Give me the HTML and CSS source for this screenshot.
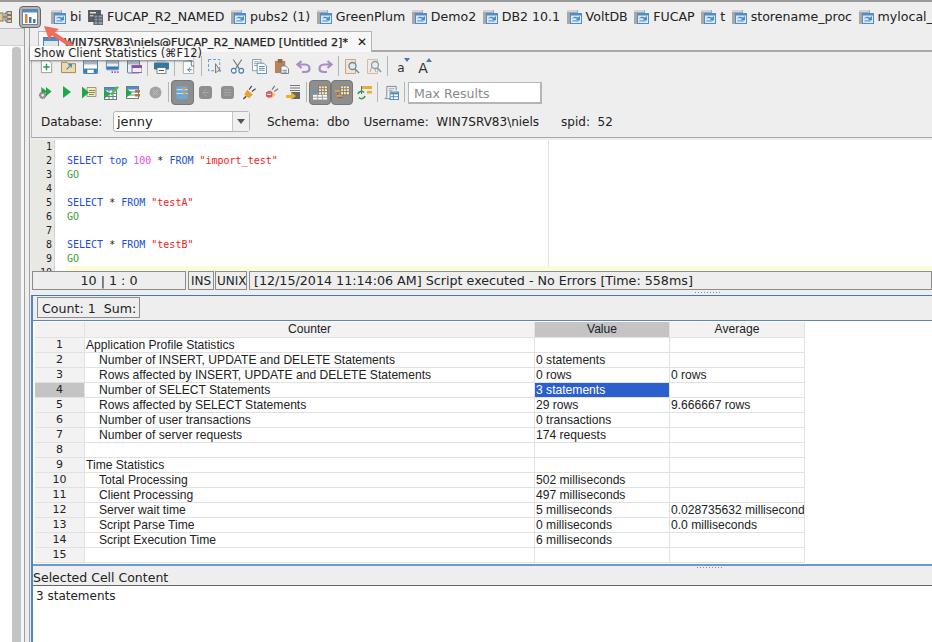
FILE: index.html
```html
<!DOCTYPE html>
<html lang="en">
<head>
<meta charset="utf-8">
<title>SQL client statistics</title>
<link rel="stylesheet" href="styles.css">
</head>
<body>
<svg class="defs" xmlns="http://www.w3.org/2000/svg">
  <symbol id="conn" viewBox="0 0 15 16">
    <rect x="0" y="1" width="11" height="14" fill="#a8a8a8"/>
    <path d="M1 1v2M3 1v2M5 1v2M7 1v2M9 1v2" stroke="#fff" stroke-width="1"/>
    <rect x="3.500" y="4.500" width="11" height="10" fill="#dce9f6" stroke="#4f8dc9"/>
    <rect x="3" y="4" width="12" height="2.500" fill="#4f8dc9"/>
    <path d="M5 9.500c1.500-2 4-2 6-1l2-1.500v4h-4l1-1.200c-1.500-.6-3.300-.5-5-.3z" fill="#4f8dc9"/>
    <path d="M13 11c-1.500 2-4 2.300-6 1.200l-1.500 1.300v-2.500z" fill="#7fb2e0"/>
  </symbol>
  <symbol id="named" viewBox="0 0 15 16">
    <rect x="0" y="1" width="13" height="12" fill="#555d66"/>
    <rect x="2" y="3" width="6" height="1.500" fill="#dfe3e6"/>
    <rect x="2" y="6" width="5" height="1.500" fill="#b9c0c6"/>
    <rect x="6" y="6" width="9" height="10" fill="#8d9aa8" stroke="#48525c" stroke-width="1"/>
    <path d="M6 9h9M6 12h9M10 6v10" stroke="#48525c"/>
  </symbol>
</svg>

<header class="topbar">
  <svg class="hier" viewBox="0 0 13 12"><rect x="0" y="2" width="4" height="8" fill="#e8c98a" stroke="#777"/><rect x="8" y=".5" width="4.500" height="3" fill="#e8c98a" stroke="#777"/><rect x="8" y="4.500" width="4.500" height="3" fill="#e8c98a" stroke="#777"/><rect x="8" y="8.500" width="4.500" height="3" fill="#e8c98a" stroke="#777"/><path d="M4 6h4M6 2v8h2M6 2h2" stroke="#666" fill="none"/></svg>
  <button class="statbtn" type="button">
    <svg viewBox="0 0 16 16"><rect x=".5" y=".5" width="15" height="15" fill="#fff" stroke="#6d8296"/><rect x="1" y="1" width="14" height="2.500" fill="#4f8dc9"/><rect x="3" y="5" width="2.500" height="9" fill="#e8822e"/><rect x="7" y="8" width="2.500" height="6" fill="#3f78c0"/><rect x="11" y="10" width="2.500" height="4" fill="#3f78c0"/></svg>
  </button>
  <nav class="conns">
    <span class="conn"><svg class="ci"><use href="#conn"/></svg>bi</span>
    <span class="conn"><svg class="ci"><use href="#named"/></svg>FUCAP_R2_NAMED</span>
    <span class="conn"><svg class="ci"><use href="#conn"/></svg>pubs2 (1)</span>
    <span class="conn"><svg class="ci"><use href="#conn"/></svg>GreenPlum</span>
    <span class="conn"><svg class="ci"><use href="#conn"/></svg>Demo2</span>
    <span class="conn"><svg class="ci"><use href="#conn"/></svg>DB2 10.1</span>
    <span class="conn"><svg class="ci"><use href="#conn"/></svg>VoltDB</span>
    <span class="conn"><svg class="ci"><use href="#conn"/></svg>FUCAP</span>
    <span class="conn"><svg class="ci"><use href="#conn"/></svg>t</span>
    <span class="conn"><svg class="ci"><use href="#conn"/></svg>storename_proc</span>
    <span class="conn"><svg class="ci"><use href="#conn"/></svg>mylocal_</span>
  </nav>
</header>

<div class="main">
  <aside class="side">
    <div class="side-head"></div>
    <div class="side-body"><div class="side-scroll"></div></div>
  </aside>

  <section class="work">
    <div class="tabstrip">
      <div class="tab">
        <svg class="tabicon" viewBox="0 0 16 16"><rect x=".5" y=".5" width="15" height="15" fill="#dfe7ee" stroke="#5a7f9f"/><rect x="1" y="1" width="14" height="3" fill="#4f8dc9"/></svg>
        <span class="tabtext">WIN7SRV83\niels@FUCAP_R2_NAMED [Untitled 2]*</span>
        <span class="tabx">✕</span>
      </div>
    </div>

    <div class="tools">
      <div class="toolrow r1">
        <span class="ti"><svg viewBox="0 0 14 16"><path d="M1.500 1.500h8l3 3v10h-11z" fill="#fff" stroke="#999"/><path d="M7 5v7M3.500 8.500h7" stroke="#25a04a" stroke-width="1.600"/></svg></span>
        <span class="ti"><svg viewBox="0 0 16 14"><path d="M.5 2.500h6l1 1.500h8v9.500h-15z" fill="#ecd9ae" stroke="#a08350"/><path d="M6 10l5-5M8 5h3v3" stroke="#3d86b8" fill="none" stroke-width="1.200"/></svg></span>
        <span class="ti"><svg viewBox="0 0 14 14"><rect x=".5" y=".5" width="13" height="13" rx="1" fill="#e8eef3" stroke="#4b86b4"/><rect x="1" y="1" width="12" height="4" fill="#a9b5bf"/><rect x="1" y="6" width="12" height="3" fill="#fff"/><rect x="1" y="9" width="12" height="4" fill="#3a7aad"/><rect x="4" y="10" width="6" height="3" fill="#fff"/></svg></span>
        <span class="ti"><svg viewBox="0 0 14 16"><rect x=".5" y=".5" width="13" height="11" rx="1" fill="#e8eef3" stroke="#4b86b4"/><rect x="1" y="1" width="12" height="4" fill="#a9b5bf"/><rect x="1" y="8" width="12" height="3" fill="#3a7aad"/><path d="M6 14h1.500M9 14h1.500M12 14h1.500" stroke="#8a50a8" stroke-width="2"/></svg></span>
        <span class="ti"><svg viewBox="0 0 15 14"><rect x=".5" y=".5" width="12" height="13" rx="1" fill="#e8eef3" stroke="#4b86b4"/><rect x="1" y="1" width="11" height="4" fill="#a9b5bf"/><rect x="5" y="6" width="10" height="7" fill="#f2eaf5" stroke="#8a6aa0"/><rect x="5" y="6" width="10" height="2.500" fill="#8a50a8"/></svg></span>
        <span class="sep"></span>
        <span class="ti"><svg viewBox="0 0 15 14"><rect x="3" y="0" width="9" height="3" fill="#cfd6dc"/><rect x="0" y="3" width="15" height="7" rx="1" fill="#2f78a8"/><rect x="3" y="8" width="9" height="6" fill="#fff" stroke="#555" stroke-width=".7"/><path d="M5 11h5" stroke="#555"/></svg></span>
        <span class="sep"></span>
        <span class="ti"><svg viewBox="0 0 14 16"><path d="M1.500 2.500h11v13h-11z" fill="#fff" stroke="#aaa"/><path d="M7 1.500h3v6h3M9 9l-3 2.500 3 2.500M6 11.500h5" fill="none" stroke="#3d86b8"/></svg></span>
        <span class="sep"></span>
        <span class="ti"><svg viewBox="0 0 16 16"><path d="M.5.5h12v12H.5z" fill="none" stroke="#4b9ad0" stroke-dasharray="3 2"/><path d="M8 5v10l2.500-2.500 3 .5z" fill="#ddd" stroke="#777"/></svg></span>
        <span class="ti"><svg viewBox="0 0 15 16"><path d="M3 .5l6.500 10M12 .5L5.500 10.500" stroke="#777" stroke-width="1.200"/><circle cx="3.500" cy="12.500" r="2.500" fill="#fff" stroke="#3d7fb0" stroke-width="1.200"/><circle cx="11.500" cy="12.500" r="2.500" fill="#fff" stroke="#3d7fb0" stroke-width="1.200"/></svg></span>
        <span class="ti"><svg viewBox="0 0 16 16"><rect x=".5" y=".5" width="9" height="12" fill="#fff" stroke="#8aa0b2"/><path d="M2 3h6M2 5h6M2 7h6" stroke="#8aa0b2"/><path d="M5.500 4.500h7l3 3v8h-10z" fill="#fff" stroke="#5e8cb0"/><path d="M7.500 8h6M7.500 10h6M7.500 12h6" stroke="#4b86b4"/></svg></span>
        <span class="ti"><svg viewBox="0 0 16 16"><rect x="1" y="2" width="11" height="13" fill="#b9835a"/><rect x="4" y="0" width="5" height="4" fill="#8a6a50"/><path d="M7.500 7.500h5l3 3v5h-8z" fill="#fff" stroke="#6a7d8c"/><path d="M9 12h5M9 14h5" stroke="#6a7d8c"/></svg></span>
        <span class="ti"><svg viewBox="0 0 15 14"><path d="M5.500 1.500L1.500 5l4 3.500M2 5h7c3 0 4.500 2 4.500 4s-1.500 3.500-4.500 3.500H6" fill="none" stroke="#ab8cc4" stroke-width="2.200"/></svg></span>
        <span class="ti"><svg viewBox="0 0 15 14"><path d="M9.500 1.500l4 3.500-4 3.500M13 5H6C3 5 1.500 7 1.500 9s1.500 3.500 4.500 3.500h3" fill="none" stroke="#ab8cc4" stroke-width="2.200"/></svg></span>
        <span class="sep"></span>
        <span class="ti"><svg viewBox="0 0 15 15"><path d="M.5.5h10v14H.5z" fill="#f3e3d0" stroke="#c7a888"/><circle cx="7.500" cy="7" r="3.500" fill="#dfe9f0" stroke="#6f8796" stroke-width="1.300"/><path d="M10 10l4 4" stroke="#6f8796" stroke-width="1.600"/></svg></span>
        <span class="ti"><svg viewBox="0 0 15 15"><path d="M.5.5h10v14H.5z" fill="#f5eadf" stroke="#d2bba5"/><path d="M3 13l3-9 3 9" fill="none" stroke="#aaa"/><circle cx="8" cy="6" r="3.500" fill="#e6edf2" stroke="#8b9ca8" stroke-width="1.300"/><path d="M10.500 9l3.500 4" stroke="#8b9ca8" stroke-width="1.600"/></svg></span>
        <span class="sep"></span>
        <span class="ti fa small">a<i class="up dn"></i></span>
        <span class="ti fa">A<i class="up"></i></span>
      </div>

      <div class="toolrow r2">
        <span class="ti"><svg viewBox="0 0 15 16"><path d="M3 2l6 5-6 5z" fill="#1fa84a"/><path d="M8 2l6 5-6 5z" fill="#1fa84a"/><circle cx="4.500" cy="11" r="3.500" fill="#999" stroke="#666" stroke-dasharray="1.500 1"/><circle cx="4.500" cy="11" r="1.300" fill="#eee"/></svg></span>
        <span class="ti"><svg class="play" viewBox="0 0 10 14"><path d="M1 1l8 6-8 6z" fill="#1fa84a"/></svg></span>
        <span class="ti"><svg viewBox="0 0 15 14"><path d="M5 2h9v9H5z" fill="#f6eab8" stroke="#9a9a80"/><path d="M7 5h6M7 7h6M7 9h5" stroke="#8a8a70"/><path d="M0 1l7 6-7 6z" fill="#1fa84a"/></svg></span>
        <span class="ti"><svg viewBox="0 0 15 15"><rect x=".5" y="2.500" width="12" height="12" fill="#fff" stroke="#6a7d8c"/><rect x="1" y="3" width="11" height="2.500" fill="#4f8dc9"/><path d="M1 8.500h11M1 11.500h11M5 5v9M9 5v9" stroke="#6a7d8c"/><path d="M0 4l6 5-6 5z" fill="#1fa84a"/><path d="M6 9l7-8 2 1.500-7 8z" fill="#5fb84a"/></svg></span>
        <span class="ti"><svg viewBox="0 0 15 15"><rect x=".5" y="1.500" width="12" height="12" fill="#fff" stroke="#6a7d8c"/><rect x="1" y="2" width="11" height="2.500" fill="#4f8dc9"/><path d="M1 7h11M1 10h11" stroke="#6a7d8c"/><path d="M0 3l6 5-6 5z" fill="#1fa84a"/><rect x="9" y="5" width="5" height="2.500" fill="#a87a40"/><rect x="9" y="9" width="5" height="2.500" fill="#a87a40"/></svg></span>
        <span class="ti"><svg class="stop" viewBox="0 0 13 13"><circle cx="6.500" cy="6.500" r="6" fill="#a3a3a3"/><path d="M4 4l5 5M9 4l-5 5" stroke="#bcbcbc"/></svg></span>
        <span class="sep"></span>
        <span class="ti on w23"><svg viewBox="0 0 15 16"><rect x="1" y="1" width="12" height="14" rx="2" fill="#6fa6d8"/><path d="M1 5h12M1 9h12" stroke="#dcebf7"/><path d="M6 4l4-2v4zM12 9l-4-2v4z" fill="#e8a030"/></svg></span>
        <span class="ti"><svg class="mute" viewBox="0 0 13 13"><rect width="13" height="13" rx="3" fill="#8f8f8f"/><path d="M4 6.500h6M7 3l-3 3.500L7 10" stroke="#a8a8a8" fill="none"/></svg></span>
        <span class="ti"><svg class="mute" viewBox="0 0 13 13"><rect width="13" height="13" rx="3" fill="#8f8f8f"/><path d="M3 4h7M3 6.500h7M3 9h7" stroke="#a8a8a8"/></svg></span>
        <span class="ti"><svg viewBox="0 0 15 16"><path d="M10 1L7 5M14 4l-4 3" stroke="#444" stroke-width="1.200"/><path d="M5 5l6 5-4 4-5-4z" fill="#e8a030"/><path d="M4 12l-3 3" stroke="#444" stroke-width="1.400"/></svg></span>
        <span class="ti"><svg viewBox="0 0 15 16"><path d="M11 1L8 5M14.500 4l-4 3" stroke="#777" stroke-width="1.200"/><path d="M6 5l6 5-4 4-5-4z" fill="#efc486"/><circle cx="5" cy="10" r="3.500" fill="#e05555"/><path d="M3 10h4" stroke="#fff" stroke-width="1.300"/></svg></span>
        <span class="ti"><svg viewBox="0 0 15 15"><path d="M4 .5h10M4 3h10M4 5.500h10" stroke="#777"/><rect x="5" y="7" width="9" height="7" fill="#666"/><path d="M0 10h5V7l5 4-5 4v-2H0z" fill="#edb02c"/></svg></span>
        <span class="sep"></span>
        <span class="ti on"><svg viewBox="0 0 16 15"><rect x="6" y=".5" width="9.500" height="9.500" fill="#f4ecd8" stroke="#8c7a5a"/><path d="M6 3.500h9M6 6.500h9M9 1v9M12 1v9" stroke="#8c7a5a"/><rect x="0" y="5" width="5" height="2" fill="#4f9ad8"/><rect x="0" y="10" width="15" height="5" fill="#fff"/><path d="M0 12.500h15M5 10v5M10 10v5" stroke="#999"/></svg></span>
        <span class="ti on"><svg viewBox="0 0 16 15"><rect x="6" y=".5" width="9.500" height="9.500" fill="#f4ecd8" stroke="#8c7a5a"/><path d="M6 3.500h9M6 6.500h9M9 1v9M12 1v9" stroke="#8c7a5a"/><rect x="0" y="5" width="5" height="2" fill="#e8a030"/><rect x="2" y="10" width="5" height="2" fill="#e8a030"/><path d="M3 7v3M3 13h5" stroke="#666"/></svg></span>
        <span class="ti"><svg viewBox="0 0 15 15"><rect x="4" y="1" width="11" height="3" fill="#e8b030"/><rect x="10" y="6" width="5" height="2.500" fill="#e8b030"/><rect x="4" y="1" width="1" height="8" fill="#666"/><path d="M1 9a3.500 3.500 0 0 1 6-1.500M8 11a3.500 3.500 0 0 1-6 1.500" stroke="#2f9a4a" stroke-width="1.600" fill="none"/></svg></span>
        <span class="sep"></span>
        <span class="ti"><svg viewBox="0 0 16 16"><path d="M3 1.500h10M3 1.500v11l-2 2h9M13 1.500v4" stroke="#7a8896" fill="#f4f4f4"/><path d="M5 4h6M5 6h4" stroke="#9aa6b0"/><rect x="6.500" y="7.500" width="9" height="8" fill="#fff" stroke="#4b86b4"/><rect x="7" y="8" width="8" height="2" fill="#4b86b4"/><path d="M7 12.500h8M10 10v5" stroke="#4b86b4"/></svg></span>
        <span class="sep"></span>
        <input class="maxres" type="text" placeholder="Max Results">
      </div>

      <div class="dbrow">
        <span class="lbl">Database:</span>
        <span class="select"><span class="select-val">jenny</span><span class="select-btn"><i></i></span></span>
        <span class="meta">Schema:  dbo</span>
        <span class="meta m-user">Username:  WIN7SRV83\niels</span>
        <span class="meta m-spid">spid:  52</span>
      </div>
    </div>

    <div class="editor">
      <div class="gutter">1
2
3
4
5
6
7
8
9
10</div>
      <div class="code"><div class="margin"></div><pre class="sql">&nbsp;
<b>SELECT top</b> <em>100</em> * <b>FROM</b> <q>"import_test"</q>
<u>GO</u>

<b>SELECT</b> * <b>FROM</b> <q>"testA"</q>
<u>GO</u>

<b>SELECT</b> * <b>FROM</b> <q>"testB"</q>
<u>GO</u>
<span class="curline"></span></pre></div>
    </div>

    <div class="status">
      <span class="st st-pos">10 | 1 : 0</span>
      <span class="st st-ins">INS</span>
      <span class="st st-unix">UNIX</span>
      <span class="st st-msg">[12/15/2014 11:14:06 AM] Script executed - No Errors [Time: 558ms]</span>
    </div>
    <div class="split"><i class="dots"></i></div>

    <div class="lower">
      <div class="countbar"><span class="count">Count: 1  Sum:</span></div>
      <div class="tablewrap">
        <table class="stats">
          <colgroup><col class="c0"><col class="c1"><col class="c2"><col class="c2"></colgroup>
          <thead><tr><th class="rh"></th><th>Counter</th><th class="hl">Value</th><th>Average</th></tr></thead>
          <tbody>
            <tr><td class="rh">1</td><td>Application Profile Statistics</td><td></td><td></td></tr>
            <tr><td class="rh">2</td><td class="in">Number of INSERT, UPDATE and DELETE Statements</td><td>0 statements</td><td></td></tr>
            <tr><td class="rh">3</td><td class="in">Rows affected by INSERT, UPDATE and DELETE Statements</td><td>0 rows</td><td>0 rows</td></tr>
            <tr><td class="rh hl">4</td><td class="in">Number of SELECT Statements</td><td class="sel">3 statements</td><td></td></tr>
            <tr><td class="rh">5</td><td class="in">Rows affected by SELECT Statements</td><td>29 rows</td><td>9.666667 rows</td></tr>
            <tr><td class="rh">6</td><td class="in">Number of user transactions</td><td>0 transactions</td><td></td></tr>
            <tr><td class="rh">7</td><td class="in">Number of server requests</td><td>174 requests</td><td></td></tr>
            <tr><td class="rh">8</td><td></td><td></td><td></td></tr>
            <tr><td class="rh">9</td><td>Time Statistics</td><td></td><td></td></tr>
            <tr><td class="rh">10</td><td class="in">Total Processing</td><td>502 milliseconds</td><td></td></tr>
            <tr><td class="rh">11</td><td class="in">Client Processing</td><td>497 milliseconds</td><td></td></tr>
            <tr><td class="rh">12</td><td class="in">Server wait time</td><td>5 milliseconds</td><td>0.028735632 milliseconds</td></tr>
            <tr><td class="rh">13</td><td class="in">Script Parse Time</td><td>0 milliseconds</td><td>0.0 milliseconds</td></tr>
            <tr><td class="rh">14</td><td class="in">Script Execution Time</td><td>6 milliseconds</td><td></td></tr>
            <tr><td class="rh">15</td><td></td><td></td><td></td></tr>
          </tbody>
        </table>
      </div>
      <div class="split2"><i class="dots"></i></div>
      <div class="cellhead">Selected Cell Content</div>
      <div class="cellbody">3 statements</div>
    </div>
  </section>
</div>

<svg class="arrow" viewBox="0 0 40 30"><path d="M1 0l15 3-4 3.500L31 19l-3 3L9 9.500 6 14z" fill="#f26d5c"/></svg>
<div class="tooltip">Show Client Statistics (⌘F12)</div>
</body>
</html>
```

FILE: styles.css
```css
* { box-sizing: border-box; }
html, body { margin: 0; height: 100%; }
body {
  width: 932px; height: 642px; overflow: hidden; position: relative;
  background: #eeeeee; color: #222;
  font: 12px "DejaVu Sans", sans-serif;
  display: flex; flex-direction: column;
}
.defs { display: none; }

.topbar {
  height: 28px; flex: none; display: flex; align-items: center;
  border-top: 2px solid #9a9a9a; background: #eeeeee; padding-top: 3px; overflow: hidden;
}
.hier { width: 13px; height: 12px; flex: none; margin-left: -1px; }
.statbtn {
  width: 22px; height: 22px; flex: none; margin: 0 0 0 7px; padding: 0;
  border: 1px solid #666; border-radius: 4px; background: #b4b4b4; display: flex;
  align-items: center; justify-content: center;
}
.statbtn svg { width: 16px; height: 16px; }
.conns { display: flex; gap: 6.5px; margin-left: 10px; white-space: nowrap; font-size: 12.6px; color: #222; }
.conn { display: flex; align-items: center; gap: 4px; }
.ci { width: 15px; height: 16px; flex: none; }

.main { flex: 1; display: flex; min-height: 0; }
.side { width: 25px; flex: none; display: flex; flex-direction: column; border-right: 1px solid #a0a0a0; border-top: 1px solid #bdbdbd; }
.side-head { height: 17px; background: #e8e8e8; border-bottom: 1px solid #d0d0d0; }
.side-body { flex: 1; display: flex; padding-left: 12px; padding-right: 3px; background: linear-gradient(to right, #fff 12px, #f6f6f6 12px); }
.side-scroll { width: 9px; height: 100%; margin-top: 1px; background: #c4c4c4; border-radius: 4px 4px 0 0; }

.work { flex: 1; min-width: 0; margin-left: 4px; padding-left: 1px; display: flex; flex-direction: column; border-left: 1px solid #a0a0a0; }

.tabstrip { height: 24px; flex: none; padding: 3px 0 0 7px; border-bottom: 2px solid #a8a8a8; display: flex; }
.tab {
  width: 334px; height: 21px; display: flex; align-items: center; background: #f7f7f7;
  border: 1px solid #b5b5b5; border-bottom: 0; padding-left: 4px; font-size: 11.2px; color: #222;
}
.tabicon { width: 16px; height: 16px; flex: none; margin-top: 5px; }
.tabtext { margin-left: 5px; white-space: nowrap; -webkit-text-stroke: .25px #222; }
.tabx { margin-left: 9px; font-size: 12px; font-weight: bold; color: #111; }

.tools { height: 86px; flex: none; border-bottom: 1px solid #a8a8a8; border-left: 1px solid #b5b5b5; padding-left: 2px; display: flex; flex-direction: column; }
.toolrow { display: flex; align-items: center; }
.r1 { height: 26px; padding-top: 2px; margin-left: 1px; }
.r2 { height: 26px; margin-top: 1px; }
.ti { width: 22px; height: 22px; flex: none; display: flex; align-items: center; justify-content: center; position: relative; }
.ti svg { width: 15px; height: 15px; }
.ti svg.play { width: 10px; height: 14px; }
.ti svg.stop, .ti svg.mute { width: 13px; height: 13px; }
.ti.on { background: #8e8e8e; border-radius: 4px; border: 1px solid #777; }
.w23 { width: 23px; height: 26px; }
.r2 .ti.on { height: 25px; }
.sep { width: 1px; height: 20px; flex: none; margin: 0 2px; background: #b5b5b5; }
.fa { font-size: 14px; color: #333; padding-top: 3px; }
.small { font-size: 12px; }
.up { position: absolute; right: 2px; top: 3px; width: 0; height: 0; border: 3px solid transparent; border-bottom: 4px solid #3f78c0; border-top: 0; }
.dn { border-bottom: 0; border-top: 4px solid #3f78c0; }
.maxres {
  width: 134px; height: 22px; margin: 1px 0 0 1px; flex: none; border: 1px solid #b5b5b5; border-bottom-width: 2px; border-right-width: 2px; background: #fff; padding: 3px 5px 0;
  font: 12.6px "DejaVu Sans", sans-serif;
}
.maxres::placeholder { color: #8a8a8a; opacity: 1; }

.dbrow { display: flex; align-items: center; height: 27px; padding-left: 7px; margin-top: 3px; font-size: 12px; white-space: pre; color: #222; }
.lbl { width: 72px; }
.select { width: 137px; height: 21px; display: flex; background: #fff; border: 1px solid #b5b5b5; border-radius: 3px; flex: none; }
.select-val { flex: 1; padding: 2px 3px; font-size: 13px; }
.select-btn { width: 17px; border-left: 1px solid #c5c5c5; background: #f0f0f0; display: flex; align-items: center; justify-content: center; }
.select-btn i { border: 4px solid transparent; border-top: 5px solid #555; border-bottom: 0; }
.meta { margin-left: 17px; }
.meta.m-user { margin-left: 14px; }
.meta.m-spid { margin-left: 22px; }

.editor { height: 131px; flex: none; margin-top: 2px; display: flex; background: #fff; overflow: hidden; }
.gutter {
  width: 24px; flex: none; background: #e9e9e4; border-right: 1px solid #d5d5d0; white-space: pre; text-align: right; padding-right: 2px;
  font: 10px/14px "DejaVu Sans Mono", monospace; color: #222; overflow: hidden;
}
.code { flex: 1; position: relative; padding-left: 12px; overflow: hidden; }
.margin { position: absolute; left: 493px; top: 0; height: 126px; width: 1px; background: #e2e2e2; }
.sql { margin: 0; font: 10px/14px "DejaVu Sans Mono", monospace; color: #222; position: relative; }
.sql b { font-weight: normal; color: #1a4de0; }
.sql em { font-style: normal; color: #e84ee0; }
.sql q { quotes: none; color: #ee2222; }
.sql u { text-decoration: none; color: #3aa03a; }
.curline { display: block; background: #fdfbd8; height: 14px; }

.status { height: 19px; flex: none; display: flex; font-size: 12.7px; line-height: 16px; color: #222; white-space: nowrap; gap: 1px; }
.st { border: 1px solid #8c8c8c; background: #eeeeee; padding: 1px 2px 0; height: 19px; }
.st-pos { width: 154px; text-align: center; margin-left: 1px; }
.st-ins { width: 26px; margin-left: 1px; font-size: 12px; }
.st-unix { width: 32px; padding: 1px 1px 0; font-size: 12px; }
.st-msg { flex: 1; margin-left: 1px; padding-left: 4px; overflow: hidden; }
.split { height: 5px; flex: none; background: #eeeeee; padding: 2px 0 0 664px; }
.dots { display: block; width: 26px; height: 1px; background: repeating-linear-gradient(to right, #888 0 1px, transparent 1px 3px); }

.lower { flex: 1; min-height: 0; display: flex; flex-direction: column; border-top: 1px solid #3f78b5; border-left: 2px solid #4f86c6; }
.countbar { height: 25px; flex: none; padding: 1px 0 0 4px; border-bottom: 1px solid #5f86ad; }
.count { display: inline-block; width: 103px; height: 21px; border: 1px solid #8c8c8c; padding: 1px 0 0 4px; font-size: 12.6px; line-height: 19px; white-space: pre; }
.tablewrap { height: 243px; flex: none; background: #fff; padding: 1px 0 0 2px; overflow: hidden; }
.stats { table-layout: fixed; width: 770px; border-collapse: separate; border-spacing: 0; font: 12.1px/14px "Liberation Sans", sans-serif; color: #222; }
.c0 { width: 50px; } .c1 { width: 450px; } .c2 { width: 135px; }
.stats th, .stats td { padding: 0 1px; border-right: 1px solid #e2e2e2; border-bottom: 1px solid #e2e2e2; white-space: nowrap; overflow: hidden; height: 15px; }
.stats th { font-weight: normal; background: #f2f2f2; text-align: center; height: 16px; line-height: 15px; }
.stats td.rh { background: #f2f2f2; text-align: center; font: 11px/14px "DejaVu Sans", sans-serif; }
.stats td.in { padding-left: 14px; }
.stats .hl, .stats td.rh.hl { background: #c4c4c4; }
.stats td.sel { background: #2b5fcc; color: #fff; }

.split2 { height: 5px; flex: none; border-top: 2px solid #6a9ad0; padding: 1px 0 0 664px; }
.cellhead { height: 17px; flex: none; font-size: 12.5px; line-height: 17px; border-bottom: 1px solid #666; }
.cellbody { flex: 1; background: #fff; padding: 1px 3px 0; line-height: 18px; font-size: 12px; }

.tooltip {
  position: absolute; left: 30px; top: 46px; width: 163px; height: 14px; background: #fafafa;
  box-shadow: 0 1px 2px #777; font-size: 11.4px; line-height: 14px; padding-left: 4px; white-space: nowrap; color: #222;
}
.arrow { position: absolute; left: 43px; top: 26px; width: 40px; height: 30px; }
```
